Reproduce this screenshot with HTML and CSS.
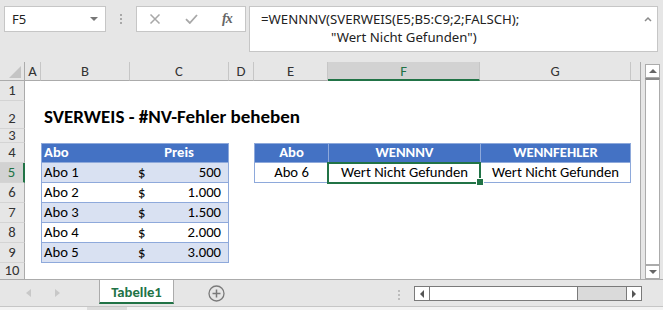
FILE: index.html
```html
<!DOCTYPE html>
<html lang="de">
<head>
  <meta charset="UTF-8">
  <title>SVERWEIS - #NV-Fehler beheben</title>
  <link rel="stylesheet" href="styles.css">
</head>
<body>
  <div class="topbar">
    <div class="namebox">
      <span>F5</span>
      <span class="caret"></span>
    </div>
    <div class="grip"><i></i><i></i><i></i></div>
    <div class="fxbox">
      <svg class="cancel" width="12" height="10" viewBox="0 0 12 10"><path d="M1.5 0.5L10.5 9.5M10.5 0.5L1.5 9.5" stroke="#a8a8a8" stroke-width="1.5"/></svg>
      <svg class="enter" width="13" height="10" viewBox="0 0 13 10"><path d="M1 5.2l3.8 3.8L12 1" fill="none" stroke="#a8a8a8" stroke-width="1.8"/></svg>
      <span class="fx">fx</span>
    </div>
    <div class="formula">
      <div class="ftext">
        <div>=WENNNV(SVERWEIS(E5;B5:C9;2;FALSCH);</div>
        <div class="indent">"Wert Nicht Gefunden")</div>
      </div>
      <svg class="collapse" width="8" height="6" viewBox="0 0 8 6"><path d="M1 5l3-3 3 3" fill="none" stroke="#8a8a8a" stroke-width="1.5"/></svg>
    </div>
  </div>

  <div class="main">
    <div class="sheet">
      <div class="row colhead">
        <div class="rh corner"><span class="tri"></span></div>
        <div class="cell ca">A</div>
        <div class="cell cb">B</div>
        <div class="cell cc">C</div>
        <div class="cell cd">D</div>
        <div class="cell ce">E</div>
        <div class="cell cf active">F</div>
        <div class="cell cg">G</div>
        <div class="cell crest"></div>
      </div>

      <div class="row"><div class="rh">1</div></div>

      <div class="row r2">
        <div class="rh">2</div>
        <div class="cell ca"></div>
        <div class="cell cb title">SVERWEIS - #NV-Fehler beheben</div>
      </div>

      <div class="row r3"><div class="rh">3</div></div>

      <div class="row">
        <div class="rh">4</div>
        <div class="cell ca"></div>
        <div class="cell cb t1 head first">Abo</div>
        <div class="cell cc t1 head last center">Preis</div>
        <div class="cell cd"></div>
        <div class="cell ce t2 head first center">Abo</div>
        <div class="cell cf t2 head center">WENNNV</div>
        <div class="cell cg t2 head last center">WENNFEHLER</div>
      </div>

      <div class="row">
        <div class="rh active">5</div>
        <div class="cell ca"></div>
        <div class="cell cb t1 band first">Abo 1</div>
        <div class="cell cc t1 band last money"><span>$</span><span>500</span></div>
        <div class="cell cd"></div>
        <div class="cell ce t2 first center">Abo 6</div>
        <div class="cell cf t2 center selected">Wert Nicht Gefunden</div>
        <div class="cell cg t2 last center">Wert Nicht Gefunden</div>
      </div>

      <div class="row">
        <div class="rh">6</div>
        <div class="cell ca"></div>
        <div class="cell cb t1 first">Abo 2</div>
        <div class="cell cc t1 last money"><span>$</span><span>1.000</span></div>
      </div>

      <div class="row">
        <div class="rh">7</div>
        <div class="cell ca"></div>
        <div class="cell cb t1 band first">Abo 3</div>
        <div class="cell cc t1 band last money"><span>$</span><span>1.500</span></div>
      </div>

      <div class="row">
        <div class="rh">8</div>
        <div class="cell ca"></div>
        <div class="cell cb t1 first">Abo 4</div>
        <div class="cell cc t1 last money"><span>$</span><span>2.000</span></div>
      </div>

      <div class="row">
        <div class="rh">9</div>
        <div class="cell ca"></div>
        <div class="cell cb t1 band first">Abo 5</div>
        <div class="cell cc t1 band last money"><span>$</span><span>3.000</span></div>
      </div>

      <div class="row r10"><div class="rh">10</div></div>
    </div>

    <div class="vscroll">
      <div class="vbtn"><span class="up"></span></div>
      <div class="vthumb"></div>
      <div class="vbtn"><span class="down"></span></div>
    </div>
  </div>

  <div class="tabbar">
    <span class="nav prev"></span>
    <span class="nav next"></span>
    <div class="tab">Tabelle1</div>
    <svg class="addsheet" width="17" height="17" viewBox="0 0 17 17">
      <circle cx="8.5" cy="8.5" r="7.5" fill="none" stroke="#7a7a7a" stroke-width="1.3"/>
      <path d="M8.5 4.5v8M4.5 8.5h8" stroke="#7a7a7a" stroke-width="1.5"/>
    </svg>
    <div class="grip small"><i></i><i></i><i></i></div>
    <div class="hscroll">
      <div class="hbtn"><span class="left"></span></div>
      <div class="hthumb"></div>
      <div class="htrack"></div>
      <div class="hbtn"><span class="right"></span></div>
    </div>
  </div>
  <div class="status"><span></span></div>
</body>
</html>
```

FILE: styles.css
```css
* {
  box-sizing: border-box;
}
body {
  margin: 0;
  width: 663px;
  height: 310px;
  overflow: hidden;
  background: #e6e6e6;
  font-family: Calibri, Carlito, Lato, "Liberation Sans", sans-serif;
  font-size: 14.67px;
  color: #000;
}

/* formula bar */
.topbar {
  height: 62px;
  display: flex;
  align-items: flex-start;
  padding: 6px 0 0 4px;
}
.namebox {
  width: 102px;
  height: 26px;
  background: #fff;
  border: 1px solid #c6c6c6;
  display: flex;
  align-items: center;
  justify-content: space-between;
  padding: 0 7px 0 7px;
  font-family: "Noto Sans", sans-serif;
  font-size: 13px;
  color: #222;
}
.caret {
  width: 0;
  height: 0;
  border-left: 4px solid transparent;
  border-right: 4px solid transparent;
  border-top: 4px solid #777;
}
.grip {
  width: 30px;
  height: 26px;
  display: flex;
  flex-direction: column;
  align-items: center;
  justify-content: center;
  gap: 2px;
}
.grip i {
  width: 2px;
  height: 2px;
  background: #a8a8a8;
}
.fxbox {
  width: 110px;
  height: 26px;
  background: #fff;
  border: 1px solid #c6c6c6;
  display: flex;
  align-items: center;
  padding-left: 12px;
}
.enter {
  margin-left: 24px;
}
.fx {
  margin-left: 24px;
  font-family: "Liberation Serif", serif;
  font-style: italic;
  font-weight: bold;
  font-size: 14px;
  color: #666;
  letter-spacing: -1px;
}
.formula {
  margin-left: 3px;
  width: 409px;
  height: 46px;
  background: #fff;
  border: 1px solid #c6c6c6;
  display: flex;
  justify-content: space-between;
  padding: 3px 5px 0 11px;
}
.ftext {
  font-family: "Noto Sans", sans-serif;
  font-size: 13.2px;
  line-height: 18px;
  color: #222;
}
.indent {
  padding-left: 70px;
}
.collapse {
  margin-top: 6px;
}

/* sheet */
.main {
  display: flex;
  height: 217px;
}
.sheet {
  width: 641px;
  height: 217px;
  overflow: hidden;
  background: #fff;
  border-right: 1px solid #ababab;
}
.row {
  display: flex;
  height: 20px;
}
.r2 {
  height: 28px;
}
.r3 {
  height: 14px;
}
.r10 {
  height: 16px;
}
.rh {
  width: 25px;
  flex: none;
  background: #e6e6e6;
  border-right: 1px solid #ababab;
  border-bottom: 1px solid #d4d4d4;
  display: flex;
  align-items: flex-end;
  justify-content: center;
  padding-bottom: 1px;
  color: #333;
  font-size: 14.67px;
  line-height: 18px;
}
.r3 .rh {
  line-height: 13px;
  padding-bottom: 0;
}
.r10 .rh {
  line-height: 15px;
  border-bottom: none;
}
.rh.active {
  background: #d2d2d2;
  color: #217346;
  border-right: 2px solid #217346;
}
.cell {
  flex: none;
  height: 100%;
  display: flex;
  align-items: flex-end;
  padding: 0 2px 1px;
  white-space: nowrap;
  line-height: 18px;
}
.ca { width: 16px; }
.cb { width: 89px; }
.cc { width: 99px; }
.cd { width: 25px; }
.ce { width: 74px; }
.cf { width: 152px; }
.cg { width: 151px; }
.crest { width: 9px; }

.colhead {
  height: 19px;
  background: #e6e6e6;
}
.colhead .rh {
  border-bottom: 1px solid #ababab;
  position: relative;
}
.colhead .cell {
  justify-content: center;
  align-items: center;
  padding: 0;
  border-right: 1px solid #c6c6c6;
  border-bottom: 1px solid #ababab;
  color: #333;
  font-size: 14.67px;
}
.colhead .crest {
  border-right: none;
}
.colhead .cell.active {
  background: #d2d2d2;
  color: #217346;
  border-bottom: 2px solid #217346;
}
.tri {
  position: absolute;
  right: 3px;
  bottom: 2px;
  width: 0;
  height: 0;
  border-left: 12px solid transparent;
  border-bottom: 12px solid #c4c4c4;
}

.title {
  font-weight: bold;
  font-size: 19px;
  overflow: visible;
  padding-left: 3px;
  padding-bottom: 1px;
  line-height: 22px;
}

/* tables */
.t1, .t2 {
  border-bottom: 1px solid #8ea9db;
}
.head {
  background: #4472c4;
  color: #fff;
  font-weight: bold;
  border-top: 1px solid #8ea9db;
}
.t1.first, .t2.first {
  border-left: 1px solid #8ea9db;
}
.t1.last, .t2.last {
  border-right: 1px solid #8ea9db;
}
.t2 + .t2 {
  border-left: 1px solid #8ea9db;
}
.band {
  background: #d9e1f2;
}
.center {
  justify-content: center;
}
.money {
  justify-content: space-between;
  padding: 0 7px 1px 8px;
}
.selected {
  position: relative;
  outline: 2px solid #217346;
  outline-offset: -1px;
}
.selected::after {
  content: "";
  position: absolute;
  right: -4px;
  bottom: -4px;
  width: 6px;
  height: 6px;
  background: #217346;
  border: 1px solid #fff;
}

/* vertical scrollbar */
.vscroll {
  margin: 2px 0 0 4px;
  width: 15px;
  height: 215px;
  display: flex;
  flex-direction: column;
}
.vbtn {
  height: 14px;
  border: 1px solid #ababab;
  background: #fff;
  display: flex;
  align-items: center;
  justify-content: center;
}
.vthumb {
  flex: 1;
  background: #fff;
  border-left: 1px solid #ababab;
  border-right: 1px solid #ababab;
  border-top: 2px solid #8a8a8a;
  border-bottom: 1px solid #ababab;
}
.up, .down {
  width: 0;
  height: 0;
  border-left: 4px solid transparent;
  border-right: 4px solid transparent;
}
.up {
  border-bottom: 4px solid #666;
}
.down {
  border-top: 4px solid #666;
}

/* sheet tabs */
.tabbar {
  height: 27px;
  border-top: 1px solid #ababab;
  display: flex;
  align-items: flex-start;
}
.nav {
  margin-top: 9px;
  width: 0;
  height: 0;
  border-top: 4px solid transparent;
  border-bottom: 4px solid transparent;
}
.prev {
  margin-left: 26px;
  border-right: 5px solid #c8c8c8;
}
.next {
  margin-left: 24px;
  border-left: 5px solid #c8c8c8;
}
.tab {
  margin-left: 39px;
  width: 75px;
  height: 24px;
  background: #fff;
  border-left: 1px solid #ababab;
  border-right: 1px solid #ababab;
  border-bottom: 2px solid #217346;
  display: flex;
  align-items: center;
  justify-content: center;
  color: #217346;
  font-weight: bold;
  font-size: 14.67px;
  padding-top: 1px;
}
.addsheet {
  margin: 5px 0 0 34px;
}
.grip.small {
  margin-left: 172px;
  width: 3px;
  height: 26px;
  gap: 2px;
  justify-content: flex-start;
  padding-top: 10px;
}
.grip.small i {
  background: #bcbcbc;
}
.hscroll {
  margin: 6px 0 0 14px;
  width: 228px;
  height: 15px;
  display: flex;
  border: 1px solid #7a7a7a;
}
.hbtn {
  width: 14px;
  background: #fff;
  display: flex;
  align-items: center;
  justify-content: center;
}
.hthumb {
  width: 149px;
  background: #fff;
  border-left: 1px solid #7a7a7a;
  border-right: 1px solid #7a7a7a;
}
.htrack {
  flex: 1;
  background: #dadada;
  border-right: 1px solid #7a7a7a;
}
.left, .right {
  width: 0;
  height: 0;
  border-top: 4px solid transparent;
  border-bottom: 4px solid transparent;
}
.left {
  border-right: 4px solid #555;
}
.right {
  border-left: 4px solid #555;
}
.status {
  height: 4px;
  border-top: 1px solid #c6c6c6;
  background: #f3f3f3;
  padding-left: 87px;
}
.status span {
  display: block;
  width: 40px;
  height: 3px;
  background: #dcdcdc;
}
```
